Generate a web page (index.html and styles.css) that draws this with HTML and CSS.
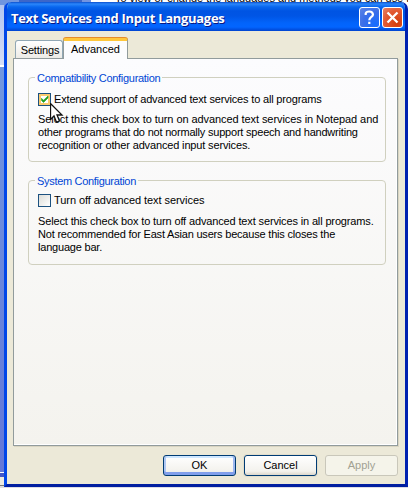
FILE: index.html
```html
<!DOCTYPE html>
<html lang="en">
<head>
<meta charset="utf-8">
<title>Text Services and Input Languages</title>
<link rel="stylesheet" href="styles.css">
</head>
<body>
<div class="behind">To view or change the languages and methods you can use to</div>
<main class="window">
  <header class="titlebar">
    <h1>Text Services and Input Languages</h1>
    <button class="cap help" aria-label="Help"><svg width="21" height="21" viewBox="0 0 21 21"><path d="M6.7 8V6.5Q7 4.5 10.3 4.5T14 7.5C14 10 10.3 10 10.3 13.2M10.3 14.8V17" fill="none" stroke="#fff" stroke-width="2.2"/></svg></button>
    <button class="cap close" aria-label="Close"><svg width="21" height="21" viewBox="0 0 21 21"><path d="M5.5 5.5L15.5 15.5M15.5 5.5L5.5 15.5" fill="none" stroke="#fff" stroke-width="2.3"/></svg></button>
  </header>
  <div class="client">
    <nav class="tabs">
      <span class="tab settings">Settings</span>
      <span class="tab active">Advanced</span>
    </nav>
    <section class="panel">
      <section class="group">
        <h2><span class="l1">Compatibility Configuration</span></h2>
        <label class="check"><span class="box hot"><svg width="11" height="11" viewBox="0 0 11 11"><path d="M2.5 4.3V6.5L4.5 8.5L9 4V2L4.5 6.3Z" fill="#21a121" stroke="#21a121" stroke-width=".6"/></svg></span><span class="l2">Extend support of advanced text services to all programs</span></label>
        <p><span class="l3">Select this check box to turn on advanced text services in Notepad and</span><br><span class="l4">other programs that do not normally support speech and handwriting</span><br><span class="l5">recognition or other advanced input services.</span></p>
      </section>
      <section class="group second">
        <h2><span class="l6">System Configuration</span></h2>
        <label class="check"><span class="box"></span><span class="l7">Turn off advanced text services</span></label>
        <p><span class="l8">Select this check box to turn off advanced text services in all programs.</span><br><span class="l9">Not recommended for East Asian users because this closes the</span><br><span class="l10">language bar.</span></p>
      </section>
    </section>
    <footer class="actions">
      <button class="btn default">OK</button>
      <button class="btn">Cancel</button>
      <button class="btn disabled">Apply</button>
    </footer>
  </div>
</main>
<svg class="cursor" width="14" height="21" viewBox="0 0 14 21"><path d="M.5.5V16.5L4 13L6.5 19.2L9.5 18L7 12H12Z" fill="#fff" stroke="#111" stroke-width="1.3"/></svg>
</body>
</html>
```
FILE: styles.css
```css
* { box-sizing: border-box; }
html { overflow: hidden; background: #dddce4; }
body {
  margin: 0; width: 408px; height: 488px; overflow: hidden;
  font: 11px/13px "Liberation Sans", sans-serif; color: #000;
  background: linear-gradient(90deg, #6f95df 0 19px, #3c66c9 19px 82px, #7394df 82px 91px, #fff 91px) 0 0 / 408px 12px no-repeat;
  padding: 2px 0 0 4px; position: relative;
}
body::before {
  content: ""; position: absolute; left: 0; top: 5px; width: 4px; height: 483px;
  background: linear-gradient(#b3c5f0 0, #d5def6 60px, #fff 60px 62px, #7197df 62px, #6377d8 467px, #fff 467px 468px, #4257c8 468px 472px, #eceae0 472px 480px, #777 480px 481px, #ddd 481px);
}
.behind { position: absolute; left: 115px; top: -8px; white-space: nowrap; letter-spacing: -.03px; }
.window {
  position: relative; width: 404px; height: 485px; border: solid #0831d9; border-width: 0 3px 3px;
  border-left-color: #0046e8; background: #ece9d8; border-radius: 7px 7px 0 0; overflow: hidden;
  border-right-color: #0021b0; border-bottom-color: #001ea0;
}
.titlebar {
  height: 29px; margin: 0 -3px; padding: 5px 5px 0 8px; display: flex; align-items: flex-start;
  background: linear-gradient(#0b50ce 0, #2b87fb 2px, #0866ee 5px, #0054e3 9px, #0055e5 14px, #0264fb 21px, #0265ff 25px, #0043cf 29px);
}
h1 { margin: 2px auto 0 -1px; font: bold 13px/18px "Open Sans", sans-serif; letter-spacing: -.31px; color: #fff; text-shadow: 1px 1px #0a1883; white-space: nowrap; }
.cap { width: 21px; height: 21px; padding: 0; border: 1px solid #fff; border-radius: 3px; margin-left: 2px; overflow: hidden; }
.cap svg { display: block; margin: -1px; }
.help { background: radial-gradient(circle at 80% 85%, #176dff, #3b6ee8 55%, #5f85e5); }
.close { background: radial-gradient(circle at 75% 80%, #d33c0b, #e25933 60%, #e98468); }
.client { padding: 7px 7px 0 6px; }
.tabs { display: flex; align-items: flex-end; height: 20px; padding-left: 2px; }
.tab { border: 1px solid #91a7b4; border-bottom: 0; border-radius: 3px 3px 0 0; text-align: center; background: linear-gradient(#fff, #ecebe6); height: 18px; width: 48px; line-height: 19px; }
.settings { padding-left: 2px; letter-spacing: -.15px; }
.active { position: relative; width: 65px; height: 21px; margin-bottom: -1px; border-color: #919b9c; border-top: 3px solid #ffc73c; box-shadow: inset 0 0 #fff, 0 -1px #e68b2c; background: #fcfcfe; line-height: 16px; }
.panel { width: 385px; height: 388px; border: 1px solid #919b9c; background: linear-gradient(#fcfcfe, #f4f3ee); box-shadow: 1px 1px #d9d5c2, inset -1px -1px #fff; padding: 18px 11px 0 14px; }
.group { height: 85px; width: 358px; border: 1px solid #d0d0bf; border-radius: 4px; padding: 0 9px; }
.second { margin-top: 18px; }
h2 { font: inherit; color: #0046d5; margin: -6px 0 8px -3px; height: 13px; }
h2 span { background: #fbfbfc; padding: 0 2px; }
.second h2 span { background: #f9f9f8; }
.second h2 { margin-bottom: 6px; }
.check { display: flex; height: 13px; gap: 3px; }
.box { width: 13px; height: 13px; border: 1px solid #1c5180; background: linear-gradient(135deg, #dcdcd7, #fff); }
.box svg { display: block; }
.hot { background: #fff; box-shadow: inset 0 0 0 2px #fbcb70; }
p { margin: 7px -8px 0 0; white-space: nowrap; }
.second p { margin-top: 8px; }
.l1 { letter-spacing: -.3px; }
.l2 { letter-spacing: -.17px; }
.l3 { letter-spacing: -.075px; }
.l4 { letter-spacing: -.205px; }
.l5 { letter-spacing: -.15px; }
.l6 { letter-spacing: -.31px; }
.l7 { letter-spacing: -.06px; }
.l8 { letter-spacing: -.14px; }
.l9 { letter-spacing: -.195px; }
.l10 { letter-spacing: -.2px; }
.actions { display: flex; gap: 8px; margin: 9px 0 0 150px; }
.btn { flex: none; width: 73px; height: 21px; padding: 0; border: 1px solid #003c74; border-radius: 3px; background: linear-gradient(#fff, #f3f2ed 80%, #dcd7cb); font: inherit; box-shadow: 0 0 0 1px #e2decd; }
.default { box-shadow: inset 0 -3px #819feb, inset 2px 0 #b0c8f3, inset -2px 0 #9db8ef, inset 0 2px #cee7ff; }
.disabled { color: #a1a192; border-color: #c9c7ba; background: #f5f4ea; box-shadow: none; }
.cursor { position: absolute; left: 50px; top: 103px; }
```
